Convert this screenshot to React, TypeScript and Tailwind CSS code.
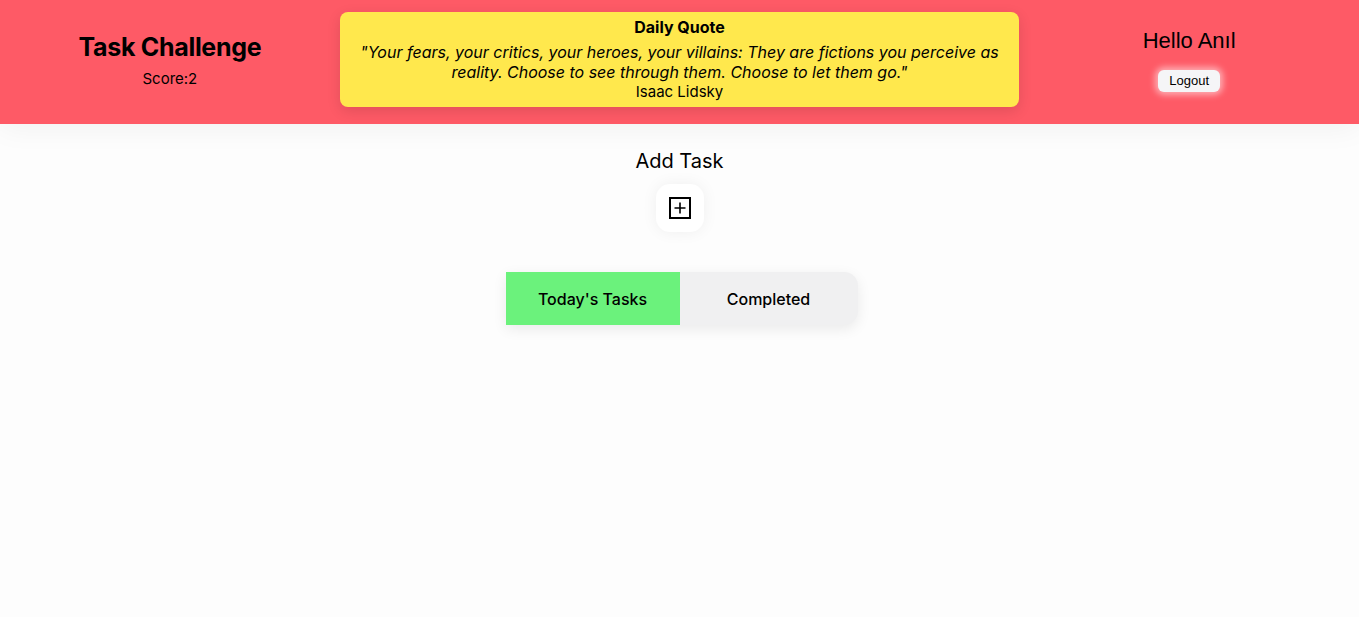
import React from "react";

export default function App() {
  return (
    <div className="min-h-[617px] w-full bg-[#fdfdfd] font-['Inter',sans-serif] text-black">
      <header className="flex h-[124px] w-full bg-[#fe5a66] shadow-[0_2px_30px_rgba(0,0,0,0.06)]">
        <div className="flex w-1/4 flex-col items-center pt-[32px]">
          <h1 className="text-[25px] font-bold leading-[30px] tracking-[-0.3px]">Task Challenge</h1>
          <div className="mt-[7px] text-[15px] leading-[20px]">Score:2</div>
        </div>
        <div className="w-1/2 pt-[12px]">
          <div className="flex h-[95px] flex-col items-center rounded-[8px] bg-[#ffe84d] pt-[6px] text-center shadow-[0_4px_14px_rgba(0,0,0,0.12)]">
            <div className="text-[16px] font-bold leading-[18px]">Daily Quote</div>
            <div className="mt-[6px] px-[20px] text-[16px] italic leading-[20px]">
              "Your fears, your critics, your heroes, your villains: They are fictions you perceive as reality. Choose to see through them. Choose to let them go."
            </div>
            <div className="mt-[1px] text-[15px] leading-[18px]">Isaac Lidsky</div>
          </div>
        </div>
        <div className="flex w-1/4 flex-col items-center pt-[28px] font-['Liberation_Sans',sans-serif]">
          <div className="text-[22px] leading-[26px]">Hello Anıl</div>
          <button className="mt-[16px] h-[22px] rounded-[6px] bg-[#f5f5f7] px-[11px] text-[13px] leading-[22px] shadow-[0_0_6px_3px_rgba(255,255,255,0.5)]">
            Logout
          </button>
        </div>
      </header>
      <main className="flex flex-col items-center">
        <div className="mt-[25px] text-[20px] leading-[24px]">Add Task</div>
        <button className="mt-[11px] flex h-[48px] w-[48px] items-center justify-center rounded-[14px] bg-white shadow-[0_0_16px_rgba(0,0,0,0.06)]">
          <svg width="22" height="22" viewBox="0 0 22 22" fill="none" stroke="black" strokeWidth="2">
            <rect x="1" y="1" width="20" height="20" />
            <path d="M11 5.5v11M5.5 11h11" strokeWidth="1.6" />
          </svg>
        </button>
        <div className="ml-[4px] mt-[40px] flex h-[53px] w-[352px] rounded-r-[14px] bg-[#f0f0f1] shadow-[0_4px_14px_rgba(0,0,0,0.08)]">
          <div className="flex w-[174px] items-center justify-center bg-[#6bf27c] text-[16px] font-medium">Today's Tasks</div>
          <div className="flex flex-1 items-center justify-center text-[16px] font-medium">Completed</div>
        </div>
      </main>
    </div>
  );
}
